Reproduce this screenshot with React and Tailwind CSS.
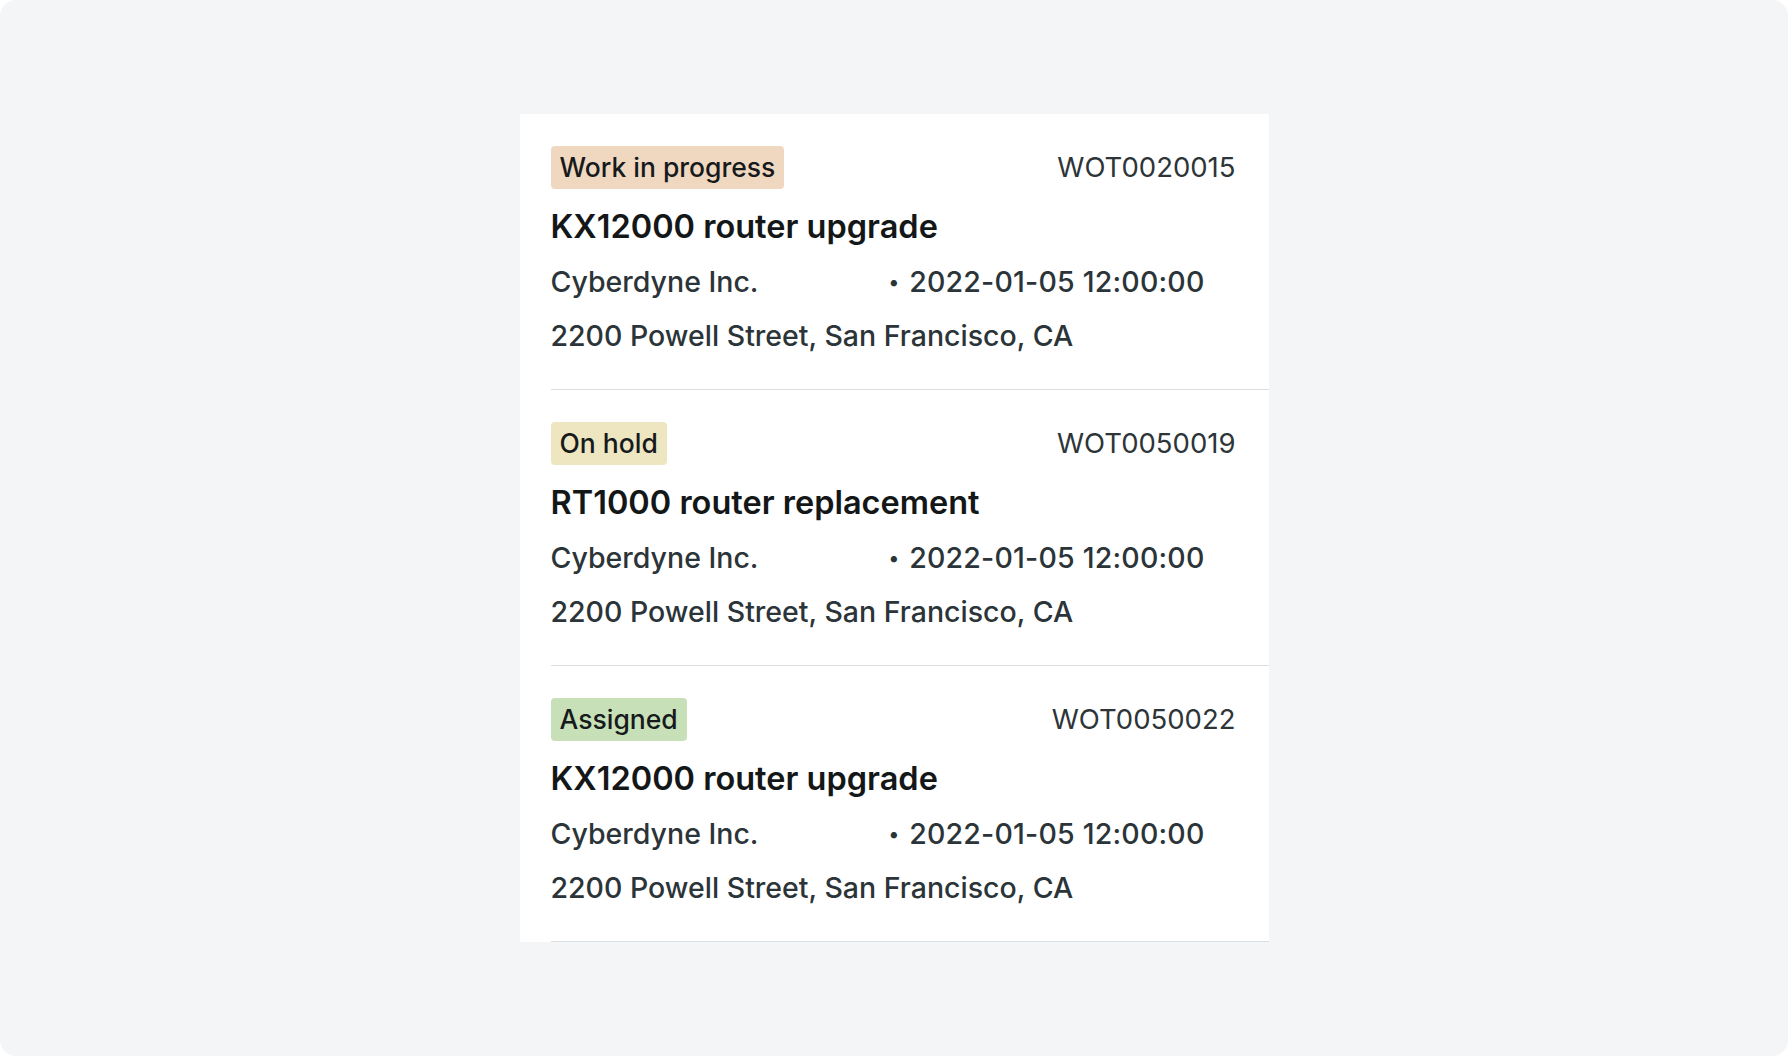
import React from 'react';

const orders = [
  {
    id: 'WOT0020015',
    status: 'Work in progress',
    badge: 'bg-[#f0d8c0]',
    title: 'KX12000 router upgrade',
  },
  {
    id: 'WOT0050019',
    status: 'On hold',
    badge: 'bg-[#ede6c0]',
    title: 'RT1000 router replacement',
  },
  {
    id: 'WOT0050022',
    status: 'Assigned',
    badge: 'bg-[#c8e0b8]',
    title: 'KX12000 router upgrade',
  },
];

const WorkOrderRow = ({ order }) => (
  <div className="ml-[31px] border-b border-[#dcdfe2]">
    <div className="pr-[33px] pt-[32px] pb-[33px]">
      <div className="flex h-[43px] items-center justify-between">
        <span
          className={`${order.badge} flex h-[43px] items-center rounded-[4px] px-[9px] text-[26.5px] font-medium text-[#161a1c]`}
        >
          {order.status}
        </span>
        <span className="text-[27.5px] font-normal text-[#2e3538]">{order.id}</span>
      </div>
      <h3 className="mt-[18px] text-[32.5px] font-semibold leading-[40px] text-[#141718]">
        {order.title}
      </h3>
      <div className="mt-[15px] flex text-[28.5px] font-medium leading-[40px] text-[#2b3438]">
        <span className="w-[338px]">Cyberdyne Inc.</span>
        <span className="text-[20px]">•</span>
        <span className="ml-[10px] tracking-[0.2px]">2022-01-05 12:00:00</span>
      </div>
      <p className="mt-[14px] text-[28.5px] font-medium leading-[40px] text-[#2b3438]">
        2200 Powell Street, San Francisco, CA
      </p>
    </div>
  </div>
);

export default function App() {
  return (
    <div className="min-h-screen w-full bg-white font-['Inter',sans-serif]">
      <div className="h-[1056px] rounded-[16px] bg-[#f4f5f7] pt-[114px]">
        <div className="mx-auto w-[749px] bg-white">
          {orders.map((order) => (
            <WorkOrderRow key={order.id} order={order} />
          ))}
        </div>
      </div>
    </div>
  );
}
